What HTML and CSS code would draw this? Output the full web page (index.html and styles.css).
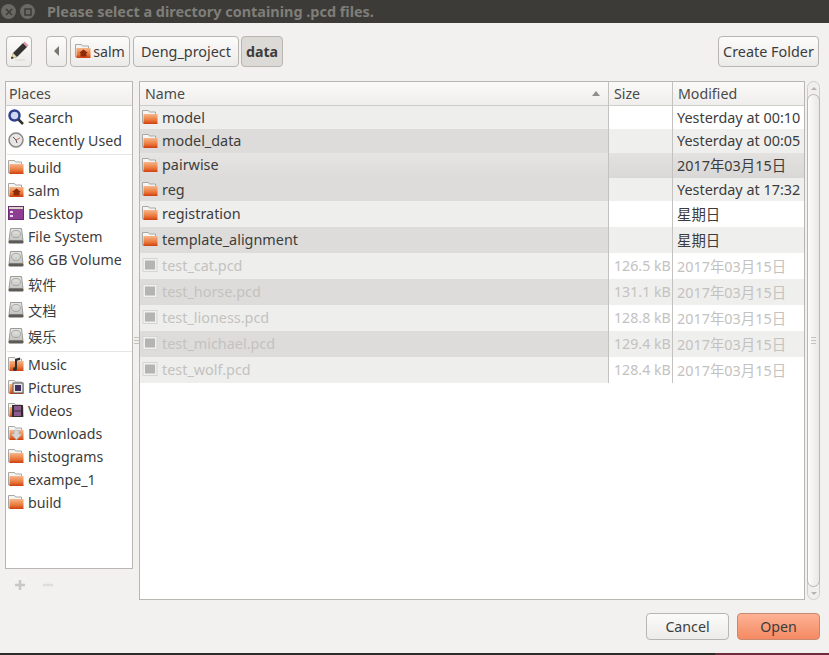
FILE: index.html
```html
<!DOCTYPE html>
<html lang="en">
<head>
  <meta charset="UTF-8">
  <title>Please select a directory containing .pcd files.</title>
  <link rel="stylesheet" href="styles.css">
</head>
<body>
  <svg class="defs" width="0" height="0">
    <defs>
      <linearGradient id="orange" x1="0" y1="0" x2="0" y2="1">
        <stop offset="0" stop-color="#f6b58a"/>
        <stop offset="0.6" stop-color="#ea7a3c"/>
        <stop offset="1" stop-color="#cf3f10"/>
      </linearGradient>
      <linearGradient id="disk" x1="0" y1="0" x2="0" y2="1">
        <stop offset="0" stop-color="#e6e6e4"/>
        <stop offset="1" stop-color="#c2c2bf"/>
      </linearGradient>
      <symbol id="folder" viewBox="0 0 16 16">
        <path d="M.5 1.500h6l1 1.500h6v11H.5z" fill="#f4f4f2" stroke="#aaa8a4"/>
        <rect x="1.500" y="5" width="14" height="10" fill="url(#orange)"/>
      </symbol>
      <symbol id="home" viewBox="0 0 16 16">
        <use href="#folder" width="16" height="16"/>
        <path d="M8.500 6.500l4.500 3.500h-1.500v3.500H5.500V10H4z" fill="#8c2a08"/>
      </symbol>
      <symbol id="drive" viewBox="0 0 16 16">
        <path d="M2.500 .5h11l1.500 12H1z" fill="url(#disk)" stroke="#9a9a97"/>
        <ellipse cx="8" cy="6" rx="4.500" ry="3.500" fill="none" stroke="#a8a8a6"/>
        <rect x=".5" y="12.500" width="15" height="3" rx="1" fill="#5c5b56"/>
      </symbol>
      <symbol id="file" viewBox="0 0 16 16">
        <rect x="1" y="1.500" width="14" height="13" fill="#f0f0ee" stroke="#d6d5d3"/>
        <rect x="3" y="3.500" width="10" height="9" fill="#b4b4b2"/>
      </symbol>
    </defs>
  </svg>

  <div class="titlebar">
    <span class="win-btn"><svg width="8" height="8" viewBox="0 0 8 8"><path d="M1 1l6 6M7 1l-6 6" stroke="#3c3b37" stroke-width="1.500"/></svg></span>
    <span class="win-btn"><svg width="8" height="8" viewBox="0 0 8 8"><rect x="1" y="1" width="6" height="6" fill="none" stroke="#3c3b37" stroke-width="1.500"/></svg></span>
    <span class="title-text">Please select a directory containing .pcd files.</span>
  </div>

  <div class="dialog">
    <div class="toolbar">
      <button class="btn btn-edit">
        <svg width="20" height="20" viewBox="0 0 20 20">
          <path d="M2 18l2-6L14 2l4 4L8 16z" fill="#33322f"/>
          <path d="M14 2l1.500-1.500 4 4L18 6z" fill="#dc93a6"/>
          <path d="M2 18l2-6 4 4z" fill="#e8d9a8"/>
          <path d="M2 18l.9-2.800 1.900 1.900z" fill="#222"/>
          <path d="M6 19h10" stroke="#d8d6d2" stroke-width="1"/>
        </svg>
      </button>
      <div class="path-bar">
        <button class="btn btn-back"><span class="arrow-left"></span></button>
        <button class="btn btn-crumb btn-salm"><svg class="ico"><use href="#home"/></svg>salm</button>
        <button class="btn btn-crumb btn-deng">Deng_project</button>
        <button class="btn btn-crumb btn-active">data</button>
      </div>
      <button class="btn btn-create">Create Folder</button>
    </div>

    <div class="panes">
      <div class="places">
        <div class="head places-head">Places</div>
        <div class="places-list">
          <div class="place"><svg class="ico" viewBox="0 0 16 16"><circle cx="6.500" cy="6.500" r="5" fill="#cfd8f0" stroke="#2f3f8f" stroke-width="2.500"/><path d="M10.500 10.500l4.500 4.500" stroke="#33322f" stroke-width="2.500"/></svg>Search</div>
          <div class="place"><svg class="ico" viewBox="0 0 16 16"><circle cx="8" cy="8" r="7" fill="#e6e6e4" stroke="#8a8983" stroke-width="1.500"/><path d="M8 8L5 5M8 8l1 3" stroke="#555" stroke-width="1"/><path d="M8 8l4-2" stroke="#c44" stroke-width=".8"/></svg>Recently Used</div>
          <div class="sep"></div>
          <div class="place"><svg class="ico"><use href="#folder"/></svg>build</div>
          <div class="place"><svg class="ico"><use href="#home"/></svg>salm</div>
          <div class="place"><svg class="ico" viewBox="0 0 16 16"><rect x=".5" y="1.500" width="15" height="13" fill="#8d3d92" stroke="#6b2a70"/><rect x="1" y="2" width="14" height="2" fill="#d9d6c4"/><rect x="2" y="6" width="3" height="2" fill="#e8d8ea"/><rect x="2" y="10" width="3" height="2" fill="#e8d8ea"/></svg>Desktop</div>
          <div class="place"><svg class="ico"><use href="#drive"/></svg>File System</div>
          <div class="place"><svg class="ico"><use href="#drive"/></svg>86 GB Volume</div>
          <div class="place place-cjk"><svg class="ico"><use href="#drive"/></svg>软件</div>
          <div class="place place-cjk"><svg class="ico"><use href="#drive"/></svg>文档</div>
          <div class="place place-cjk"><svg class="ico"><use href="#drive"/></svg>娱乐</div>
          <div class="sep"></div>
          <div class="place"><svg class="ico" viewBox="0 0 16 16"><use href="#folder" width="16" height="16"/><path d="M7 13V3l5-1.500v2.500l-3 .8V13a2 2 0 1 1-2-2z" fill="#2f2e2b"/></svg>Music</div>
          <div class="place"><svg class="ico" viewBox="0 0 16 16"><use href="#folder" width="16" height="16"/><rect x="5" y="4" width="10" height="10" fill="#e8e8e6" stroke="#555"/><rect x="7" y="6" width="6" height="6" fill="#3f2f5f"/></svg>Pictures</div>
          <div class="place"><svg class="ico" viewBox="0 0 16 16"><use href="#folder" width="16" height="16"/><rect x="4" y="3" width="11" height="12" fill="#2f2e2b"/><rect x="6" y="4" width="7" height="4.500" fill="#8d5a8f"/><rect x="6" y="9.500" width="7" height="4.500" fill="#8d5a8f"/></svg>Videos</div>
          <div class="place"><svg class="ico" viewBox="0 0 16 16"><use href="#folder" width="16" height="16"/><path d="M6 5h5v4h3l-5.500 6L3 9h3z" fill="#d4d4d2" stroke="#aaa" stroke-width=".5"/></svg>Downloads</div>
          <div class="place"><svg class="ico"><use href="#folder"/></svg>histograms</div>
          <div class="place"><svg class="ico"><use href="#folder"/></svg>exampe_1</div>
          <div class="place"><svg class="ico"><use href="#folder"/></svg>build</div>
        </div>
        <div class="places-actions">
          <svg width="12" height="12" viewBox="0 0 12 12"><path d="M6 1v10M1 6h10" stroke="#c9c7c2" stroke-width="2.500"/></svg>
          <svg width="12" height="12" viewBox="0 0 12 12"><path d="M1 6h10" stroke="#e0dedb" stroke-width="2.500"/></svg>
        </div>
      </div>

      <div class="pane-grip"><span class="grip"></span></div>

      <div class="files-wrap">
        <div class="files">
          <div class="row head-row">
            <div class="head col-name">Name<span class="sort-up"></span></div>
            <div class="head col-size">Size</div>
            <div class="head col-mod">Modified</div>
          </div>
          <div class="row h23"><div class="col-name cell"><svg class="ico"><use href="#folder"/></svg>model</div><div class="col-size cell"></div><div class="col-mod cell">Yesterday at 00:10</div></div>
          <div class="row h24 alt"><div class="col-name cell"><svg class="ico"><use href="#folder"/></svg>model_data</div><div class="col-size cell"></div><div class="col-mod cell">Yesterday at 00:05</div></div>
          <div class="row h25 sorted"><div class="col-name cell"><svg class="ico"><use href="#folder"/></svg>pairwise</div><div class="col-size cell"></div><div class="col-mod cell">2017年03月15日</div></div>
          <div class="row h23 alt"><div class="col-name cell"><svg class="ico"><use href="#folder"/></svg>reg</div><div class="col-size cell"></div><div class="col-mod cell">Yesterday at 17:32</div></div>
          <div class="row h26"><div class="col-name cell"><svg class="ico"><use href="#folder"/></svg>registration</div><div class="col-size cell"></div><div class="col-mod cell">星期日</div></div>
          <div class="row h26 alt"><div class="col-name cell"><svg class="ico"><use href="#folder"/></svg>template_alignment</div><div class="col-size cell"></div><div class="col-mod cell">星期日</div></div>
          <div class="row h26 off"><div class="col-name cell"><svg class="ico"><use href="#file"/></svg>test_cat.pcd</div><div class="col-size cell">126.5 kB</div><div class="col-mod cell">2017年03月15日</div></div>
          <div class="row h26 alt off"><div class="col-name cell"><svg class="ico"><use href="#file"/></svg>test_horse.pcd</div><div class="col-size cell">131.1 kB</div><div class="col-mod cell">2017年03月15日</div></div>
          <div class="row h26 off"><div class="col-name cell"><svg class="ico"><use href="#file"/></svg>test_lioness.pcd</div><div class="col-size cell">128.8 kB</div><div class="col-mod cell">2017年03月15日</div></div>
          <div class="row h26 alt off"><div class="col-name cell"><svg class="ico"><use href="#file"/></svg>test_michael.pcd</div><div class="col-size cell">129.4 kB</div><div class="col-mod cell">2017年03月15日</div></div>
          <div class="row h26 off"><div class="col-name cell"><svg class="ico"><use href="#file"/></svg>test_wolf.pcd</div><div class="col-size cell">128.4 kB</div><div class="col-mod cell">2017年03月15日</div></div>
        </div>
        <div class="scrollbar">
          <div class="sb-arrow"><span class="sb-up"></span></div>
          <div class="sb-thumb"><span class="grip"></span></div>
          <div class="sb-arrow"><span class="sb-down"></span></div>
        </div>
      </div>
    </div>

    <div class="actions">
      <button class="btn btn-action">Cancel</button>
      <button class="btn btn-action btn-open">Open</button>
    </div>
  </div>
  <div class="bottom-strip"><span class="strip-dark"></span><span class="strip-red"></span></div>
</body>
</html>
```

FILE: styles.css
```css
* {
  box-sizing: border-box;
}
html, body {
  margin: 0;
  height: 100%;
  overflow: hidden;
}
body {
  display: flex;
  flex-direction: column;
  width: 829px;
  height: 655px;
  background-color: #f2f1f0;
  color: #3c3c3c;
  font-family: "Noto Sans", "Noto Sans CJK SC", sans-serif;
  font-size: 14.2px;
}
.defs {
  position: absolute;
}
.ico {
  width: 16px;
  height: 16px;
  flex: none;
}

/* title bar */
.titlebar {
  display: flex;
  align-items: center;
  height: 23px;
  padding-left: 1px;
  background-color: #3c3b37;
}
.win-btn {
  display: flex;
  align-items: center;
  justify-content: center;
  width: 15px;
  height: 15px;
  margin-right: 4px;
  border-radius: 50%;
  background-color: #6a6964;
}
.title-text {
  margin-left: 8px;
  color: #7f7e79;
  font-size: 14.450px;
  font-weight: bold;
}

.dialog {
  display: flex;
  flex-direction: column;
  flex: 1;
  min-height: 0;
}

/* toolbar */
.btn {
  display: flex;
  align-items: center;
  justify-content: center;
  height: 31px;
  padding: 0 0 1px;
  border: 1px solid #b9b5b0;
  border-radius: 4px;
  background: linear-gradient(#fbfbfa, #ecebe9);
  color: #3c3c3c;
  font: inherit;
}
.toolbar {
  display: flex;
  align-items: flex-start;
  height: 58px;
  padding: 13px 10px 0 6px;
}
.btn-edit {
  width: 26px;
}
.path-bar {
  display: flex;
  flex: 1;
  gap: 3px;
  margin-left: 14px;
}
.btn-back {
  width: 21px;
}
.arrow-left {
  border-top: 5px solid transparent;
  border-bottom: 5px solid transparent;
  border-right: 5px solid #77766f;
}
.btn-salm {
  width: 60px;
  gap: 2px;
}
.btn-deng {
  width: 106px;
  font-size: 14.400px;
}
.btn-active {
  width: 42px;
  margin-left: -1px;
  background: #dcdad6;
  font-weight: bold;
}
.btn-create {
  width: 101px;
  font-size: 14.400px;
}

/* panes */
.panes {
  display: flex;
  height: 519px;
  padding-left: 5px;
  margin-right: 9px;
}
.places {
  display: flex;
  flex-direction: column;
  width: 128px;
}
.head {
  display: flex;
  align-items: center;
  height: 24px;
  padding: 0 0 0 5px;
  background: linear-gradient(#fafaf9, #efeeec);
  border-bottom: 1px solid #cfcdc9;
  color: #4a4a4a;
  font-size: 14.200px;
}
.places-head {
  flex: none;
  height: 25px;
  padding-left: 3px;
  border: 1px solid #b9b5b0;
  border-bottom-color: #cfcdc9;
}
.places-list {
  height: 463px;
  padding: 0 0 0 2px;
  background-color: #fff;
  border: 1px solid #b9b5b0;
  border-top: none;
}
.place {
  display: flex;
  align-items: center;
  gap: 4px;
  height: 23px;
  padding-bottom: 1px;
}
.place-cjk {
  height: 26px;
}
.sep {
  height: 1px;
  margin: 1.500px 0 1.500px -1px;
  background-color: #e6e5e3;
}
.places-actions {
  display: flex;
  gap: 16px;
  align-items: center;
  padding: 10px 0 0 9px;
}
.pane-grip {
  display: flex;
  align-items: center;
  justify-content: center;
  width: 6px;
  flex: none;
}
.grip {
  width: 5px;
  height: 7px;
  background: repeating-linear-gradient(#c4c2bd 0 1px, transparent 1px 3px);
}

/* file list */
.files-wrap {
  display: flex;
  flex: 1;
  min-width: 0;
}
.files {
  width: 666px;
  height: 519px;
  background-color: #fff;
  border: 1px solid #b9b5b0;
  font-size: 14.400px;
}
.row {
  display: flex;
}
.head-row {
  height: 24px;
}
.col-name {
  width: 468px;
  flex: none;
}
.col-size {
  width: 64px;
  flex: none;
  border-left: 1px solid #c4c2be;
}
.col-mod {
  flex: 1;
  border-left: 1px solid #c4c2be;
}
.head.col-name {
  justify-content: space-between;
  padding-right: 8px;
}
.sort-up {
  border-left: 4px solid transparent;
  border-right: 4px solid transparent;
  border-bottom: 5px solid #8f8e89;
}
.cell {
  display: flex;
  align-items: center;
  gap: 4px;
  padding: 0 0 1px 4px;
  overflow: hidden;
  white-space: nowrap;
}
.col-size.cell {
  padding-left: 5px;
  font-size: 14.200px;
}
.cell.col-name {
  padding-left: 2px;
  background-color: #eeeeed;
}
.h23 { height: 23px; }
.h24 { height: 24px; }
.h25 { height: 25px; }
.h25 .cell, .h26 .cell {
  padding-bottom: 2px;
}
.h26 { height: 26px; }
.alt .cell {
  background-color: #efefee;
}
.alt .cell.col-name {
  background-color: #dddcda;
}
.sorted .cell {
  background: linear-gradient(#e3e2e0, #d9d8d6);
}
.sorted .cell.col-name {
  background: linear-gradient(#e6e5e3, #dcdbd9);
}
.off .cell {
  color: #c4c2bf;
}

/* scrollbar */
.scrollbar {
  display: flex;
  flex-direction: column;
  flex: none;
  width: 13px;
  margin-left: 2px;
  border: 1px solid #cfcdc9;
  border-radius: 7px;
  background-color: #f0efee;
}
.sb-arrow {
  display: flex;
  align-items: center;
  justify-content: center;
  height: 12px;
  flex: none;
}
.sb-up {
  border-left: 3px solid transparent;
  border-right: 3px solid transparent;
  border-bottom: 3px solid #b5b3ae;
}
.sb-down {
  border-left: 3px solid transparent;
  border-right: 3px solid transparent;
  border-top: 3px solid #b5b3ae;
}
.sb-thumb {
  display: flex;
  align-items: center;
  justify-content: center;
  flex: 1;
  margin: 0 -1px;
  border: 1px solid #b9b5b0;
  border-radius: 7px;
  background: linear-gradient(90deg, #fbfbfa, #e9e8e6);
}

/* bottom buttons */
.actions {
  display: flex;
  justify-content: flex-end;
  gap: 8px;
  padding: 13px 0 0 0;
  margin-right: 9px;
}
.btn-action {
  width: 83px;
  height: 27px;
}
.btn-open {
  background: linear-gradient(#fdb294, #f48a63);
  border-color: #c88a6e;
}
.bottom-strip {
  display: flex;
  height: 2px;
  flex: none;
}
.strip-dark {
  width: 715px;
  background-color: #2c2b28;
}
.strip-red {
  flex: 1;
  background-color: #6e2b3c;
}
```
